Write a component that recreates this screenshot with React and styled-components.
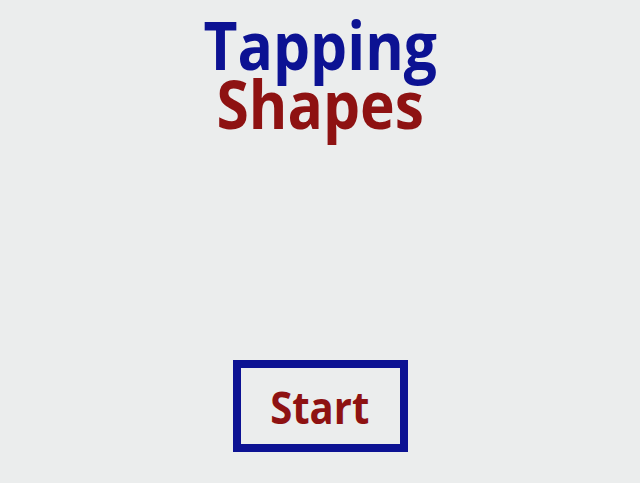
import React from "react";
import styled, { createGlobalStyle } from "styled-components";

const GlobalStyle = createGlobalStyle`
  html, body {
    margin: 0;
    padding: 0;
    background: #ebeded;
  }
  body {
    font-family: "Open Sans", "Noto Sans", sans-serif;
  }
`;

const Screen = styled.div`
  width: 640px;
  height: 483px;
  display: flex;
  flex-direction: column;
  align-items: center;
  box-sizing: border-box;
  padding-top: 15px;
`;

const Title = styled.h1`
  margin: 0;
  font-size: 66px;
  font-weight: 700;
  line-height: 59px;
  text-align: center;
`;

// the shot is squeezed sideways, so the letters are too
const Word = styled.span`
  display: block;
  color: ${({ color }) => color};
  transform: scaleX(0.89);
`;

const StartButton = styled.button`
  margin-top: 227px;
  width: 175px;
  height: 92px;
  box-sizing: border-box;
  border: 8px solid #0c1293;
  background: transparent;
  color: #8e1212;
  font-family: "Open Sans", sans-serif;
  font-size: 45px;
  font-weight: 700;
  padding: 0;
  cursor: pointer;
`;

const Label = styled.span`
  display: inline-block;
  transform: scaleX(0.89);
`;

export default function App() {
  return (
    <>
      <GlobalStyle />
      <Screen>
        <Title>
          <Word color="#0c1293">Tapping</Word>
          <Word color="#8e1212">Shapes</Word>
        </Title>
        <StartButton>
          <Label>Start</Label>
        </StartButton>
      </Screen>
    </>
  );
}
